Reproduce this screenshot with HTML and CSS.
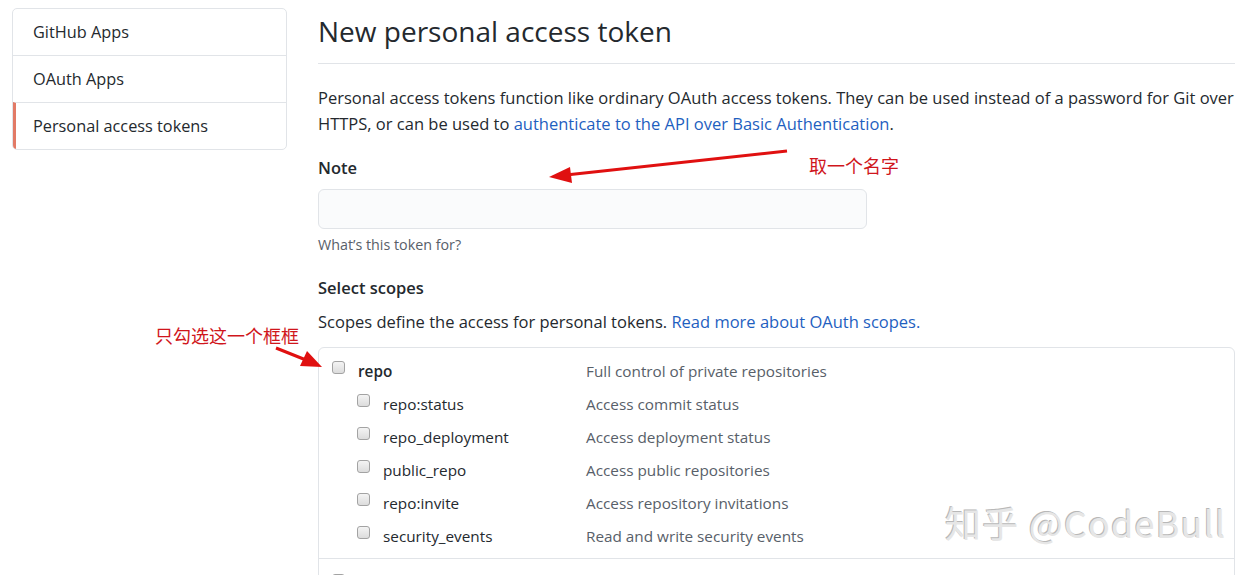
FILE: index.html
```html
<!DOCTYPE html>
<html lang="en">
<head>
<meta charset="utf-8">
<title>New personal access token</title>
<link rel="stylesheet" href="styles.css">
</head>
<body>
<div class="page">
  <nav class="menu">
    <a class="menu-item">GitHub Apps</a>
    <a class="menu-item">OAuth Apps</a>
    <a class="menu-item selected">Personal access tokens</a>
  </nav>
  <main class="main">
    <h1 class="title">New personal access token</h1>
    <p class="lead">Personal access tokens function like ordinary OAuth access tokens. They can be used instead of a password for Git over HTTPS, or can be used to <a class="link">authenticate to the API over Basic Authentication</a>.</p>
    <div class="field">
      <label class="label">Note</label>
      <div class="input"></div>
      <p class="note">What’s this token for?</p>
    </div>
    <h3 class="label scopes-title">Select scopes</h3>
    <p class="desc">Scopes define the access for personal tokens. <a class="link">Read more about OAuth scopes.</a></p>
    <div class="scopes">
      <div class="group">
        <div class="row parent"><span class="cb"></span><span class="name">repo</span><span class="info">Full control of private repositories</span></div>
        <div class="row child"><span class="cb"></span><span class="name">repo:status</span><span class="info">Access commit status</span></div>
        <div class="row child"><span class="cb"></span><span class="name">repo_deployment</span><span class="info">Access deployment status</span></div>
        <div class="row child"><span class="cb"></span><span class="name">public_repo</span><span class="info">Access public repositories</span></div>
        <div class="row child"><span class="cb"></span><span class="name">repo:invite</span><span class="info">Access repository invitations</span></div>
        <div class="row child"><span class="cb"></span><span class="name">security_events</span><span class="info">Read and write security events</span></div>
      </div>
      <div class="group">
        <div class="row parent"><span class="cb"></span></div>
      </div>
    </div>
  </main>
</div>

<div class="anno anno-name">取一个名字</div>
<div class="anno anno-check">只勾选这一个框框</div>
<svg class="arrows" width="1255" height="575" viewBox="0 0 1255 575">
  <g fill="#e01010" stroke="#e01010">
    <line x1="787" y1="151" x2="566" y2="175" stroke-width="3"/>
    <polygon points="549,177 570,167 572,183" stroke="none"/>
    <line x1="276" y1="348" x2="306" y2="360" stroke-width="3"/>
    <polygon points="322,367 300,366 307,351" stroke="none"/>
  </g>
</svg>
<div class="watermark">知乎 @CodeBull</div>
</body>
</html>
```

FILE: styles.css
```css
* { box-sizing: border-box; }
html, body { margin: 0; padding: 0; background: #fff; }
body {
  font-family: "Open Sans", "Noto Sans", "Liberation Sans", sans-serif;
  color: #24292e;
  width: 1255px;
  height: 575px;
  overflow: hidden;
  position: relative;
}
.page {
  display: flex;
  gap: 31px;
  padding: 8px 20px 0 12px;
}
.menu {
  width: 275px;
  flex: none;
  align-self: flex-start;
  border: 1px solid #e1e4e8;
  border-radius: 5px;
  display: flex;
  flex-direction: column;
  overflow: hidden;
}
.menu-item {
  display: block;
  height: 47px;
  line-height: 46px;
  padding-left: 20px;
  font-size: 16.3px;
  color: #24292e;
  border-top: 1px solid #e1e4e8;
}
.menu-item:first-child { border-top: 0; height: 46px; }
.menu-item.selected {
  border-left: 3px solid #e27a66;
  padding-left: 17px;
}
.main { flex: 1; min-width: 0; }
.title {
  margin: 0;
  font-weight: 400;
  font-size: 28px;
  line-height: 46px;
  padding-top: 0;
  padding-bottom: 9px;
  border-bottom: 1px solid #e1e4e8;
}
.lead {
  margin: 21px 0 0;
  font-size: 16.5px;
  line-height: 26px;
}
.link { color: #1f5fbf; }
.field { margin-top: 19px; }
.label {
  display: block;
  margin: 0;
  font-size: 16.5px;
  font-weight: 600;
  line-height: 24px;
}
.input {
  margin-top: 9px;
  width: 549px;
  height: 40px;
  background: #fafbfc;
  border: 1px solid #e1e4e8;
  border-radius: 6px;
}
.note {
  margin: 5px 0 0;
  font-size: 14.3px;
  line-height: 22px;
  color: #586069;
}
.scopes-title { margin-top: 20px; }
.desc {
  margin: 9px 0 0;
  font-size: 16.5px;
  line-height: 26px;
}
.scopes {
  margin-top: 12px;
  border: 1px solid #e1e4e8;
  border-radius: 6px;
}
.group { padding: 6px 0 6px; border-top: 1px solid #e1e4e8; }
.group + .group { padding-top: 8px; }
.row {
  display: flex;
  align-items: center;
  height: 33px;
  font-size: 15.3px;
}
.parent { padding-left: 13px; }
.child { padding-left: 38px; }
.cb {
  width: 13px;
  height: 13px;
  flex: none;
  border: 1px solid #a3a3a3;
  border-radius: 3px;
  background: linear-gradient(#f4f4f4, #dcdcdc);
  margin-right: 13px;
  position: relative;
  top: -3px;
}
.name { width: 203px; flex: none; }
.parent .name { width: 228px; font-weight: 600; }
.info { color: #586069; }
.group:first-child { border-top: 0; }
.anno {
  position: absolute;
  color: #d0161c;
  font-family: "Noto Sans CJK SC", sans-serif;
  font-size: 18px;
  line-height: 24px;
}
.anno-name { left: 809px; top: 153px; }
.anno-check { left: 155px; top: 323px; }
.arrows { position: absolute; left: 0; top: 0; pointer-events: none; }
.watermark {
  position: absolute;
  left: 945px;
  top: 497px;
  font-family: "Noto Sans CJK SC", "Noto Sans", sans-serif;
  font-size: 36px;
  line-height: 50px;
  color: #e6e6e6;
  text-shadow: -1px -1px 0 #b8b8b8, 1px 1px 0 #ffffff;
  letter-spacing: 1.2px;
}
```
